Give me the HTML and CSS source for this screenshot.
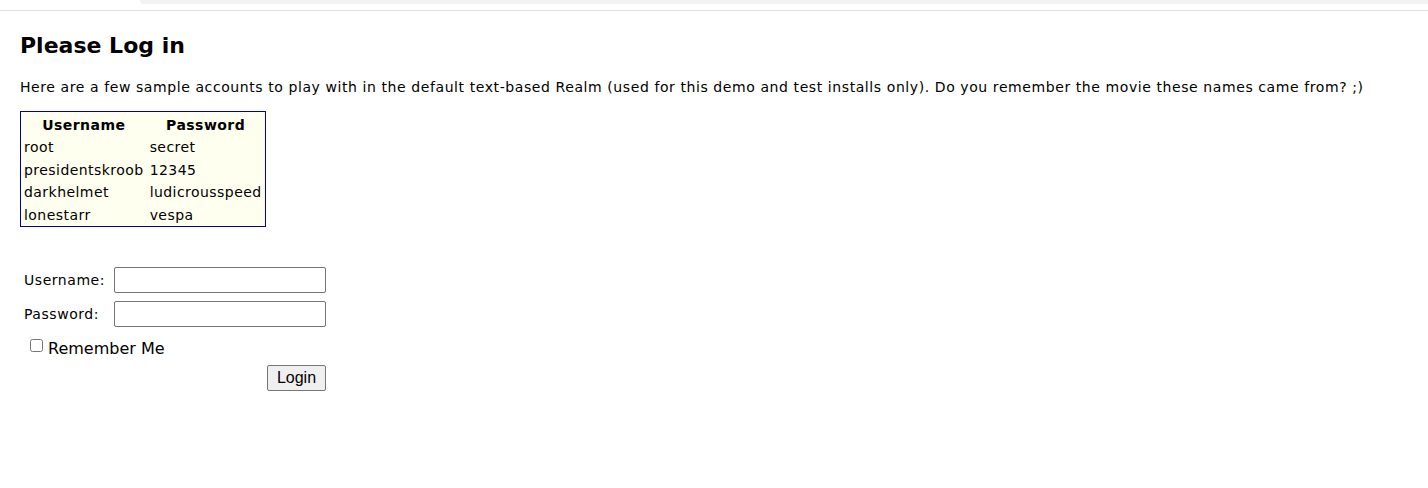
FILE: index.html
```html
<!DOCTYPE html>
<html>
<head>
<meta charset="utf-8">
<title>Please Log in</title>
<link rel="stylesheet" href="styles.css">
</head>
<body>
<div class="topbar"><div class="topbar-pill"></div></div>
<main class="content">
  <h1 class="title">Please Log in</h1>
  <p class="intro">Here are a few sample accounts to play with in the default text-based Realm (used for this demo and test installs only). Do you remember the movie these names came from? ;)</p>
  <table class="accounts">
    <thead>
      <tr><th>Username</th><th>Password</th></tr>
    </thead>
    <tbody>
      <tr><td>root</td><td>secret</td></tr>
      <tr><td>presidentskroob</td><td>12345</td></tr>
      <tr><td>darkhelmet</td><td>ludicrousspeed</td></tr>
      <tr><td>lonestarr</td><td>vespa</td></tr>
    </tbody>
  </table>
  <form class="login-form">
    <div class="field-row">
      <label class="field-label" for="u">Username:</label>
      <input class="field-input" id="u" type="text">
    </div>
    <div class="field-row">
      <label class="field-label" for="p">Password:</label>
      <input class="field-input" id="p" type="password">
    </div>
    <div class="remember-row">
      <input class="remember-box" id="r" type="checkbox">
      <label class="remember-label" for="r">Remember Me</label>
    </div>
    <div class="submit-row">
      <button class="login-btn" type="button">Login</button>
    </div>
  </form>
</main>
</body>
</html>
```

FILE: styles.css
```css
html, body {
  margin: 0;
  padding: 0;
  background: #ffffff;
}
body {
  font-family: "DejaVu Sans", Verdana, sans-serif;
  color: #000000;
}
.topbar {
  height: 10px;
  border-bottom: 1px solid #dedede;
}
.topbar-pill {
  margin-left: 140px;
  height: 4px;
  background: #f1f2f4;
  border-bottom-left-radius: 8px;
}
.content {
  padding-left: 20px;
}
.title {
  margin: 21px 0 0 0;
  font-size: 22px;
  line-height: 27px;
  font-weight: bold;
}
.intro {
  margin: 20px 0 0 0;
  font-size: 14px;
  line-height: 16px;
  letter-spacing: 0.585px;
}
.accounts {
  margin-top: 16px;
  border: 1px solid #0000aa;
  background: #fffff0;
  border-collapse: separate;
  border-spacing: 0;
  font-size: 14px;
  letter-spacing: 0.45px;
}
.accounts th {
  font-weight: bold;
  padding: 4px 3px 2px 3px;
  line-height: 18px;
  text-align: center;
}
.accounts td {
  padding: 2px 3px 2px 3px;
  line-height: 18.5px;
  text-align: left;
}
.accounts tbody tr:last-child td {
  padding-bottom: 2px;
}
.login-form {
  margin-top: 40px;
  width: 302px;
  padding-left: 4px;
  font-size: 14px;
}
.field-row {
  display: flex;
  align-items: center;
  height: 26px;
  margin-bottom: 8px;
}
.field-label {
  width: 90px;
  letter-spacing: 0.55px;
}
.field-input {
  width: 212px;
  height: 26px;
  box-sizing: border-box;
  border: 1px solid #767676;
  border-radius: 2px;
  margin: 0;
  padding: 1px 2px;
}
.remember-row {
  display: flex;
  align-items: center;
  padding-left: 6px;
  margin-top: 2px;
  height: 26px;
}
.remember-box {
  margin: 0 5px 5px 0;
  width: 13px;
  height: 13px;
}
.remember-label {
  font-size: 16px;
}
.submit-row {
  display: flex;
  justify-content: flex-end;
  margin-top: 4px;
}
.login-btn {
  font-family: "Liberation Sans", Arial, sans-serif;
  font-size: 16px;
  height: 26px;
  width: 59px;
  padding: 0;
  background: #efefef;
  border: 1px solid #767676;
  border-radius: 2px;
  color: #000;
}
```
